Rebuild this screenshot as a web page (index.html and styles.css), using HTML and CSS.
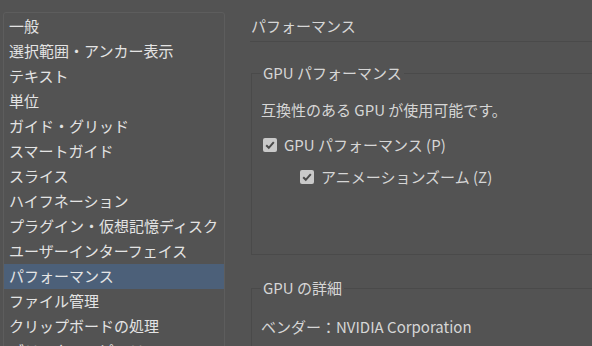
FILE: index.html
```html
<!DOCTYPE html>
<html>
 <head>
  <meta charset="utf-8">
  <link rel="stylesheet" href="styles.css">
 </head>
 <body>
  <div class="page">
   <ul class="menu">
    <li>一般</li>
    <li>選択範囲・アンカー表示</li>
    <li>テキスト</li>
    <li>単位</li>
    <li>ガイド・グリッド</li>
    <li>スマートガイド</li>
    <li>スライス</li>
    <li>ハイフネーション</li>
    <li>プラグイン・仮想記憶ディスク</li>
    <li>ユーザーインターフェイス</li>
    <li class="active">パフォーマンス</li>
    <li>ファイル管理</li>
    <li>クリップボードの処理</li>
    <li>ブラックのアピアランス</li>
   </ul>

   <div class="pane">
    <h2 class="title">パフォーマンス</h2>

    <fieldset class="group">
     <legend>GPU パフォーマンス</legend>
     <p class="note">互換性のある GPU が使用可能です。</p>
     <label class="check">
      <span class="box"><svg width="14" height="14" viewBox="0 0 14 14"><path d="M3.2 7.2 L5.8 9.8 L10.8 4.2" fill="none" stroke="#4a4a4a" stroke-width="2"/></svg></span>
      GPU パフォーマンス (P)
     </label>
     <label class="check sub">
      <span class="box"><svg width="14" height="14" viewBox="0 0 14 14"><path d="M3.2 7.2 L5.8 9.8 L10.8 4.2" fill="none" stroke="#4a4a4a" stroke-width="2"/></svg></span>
      アニメーションズーム (Z)
     </label>
    </fieldset>

    <fieldset class="group details">
     <legend>GPU の詳細</legend>
     <p class="note">ベンダー：NVIDIA Corporation</p>
    </fieldset>
   </div>
  </div>
 </body>
</html>
```

FILE: styles.css
```css
body {
  margin: 0;
  background: #535353;
  overflow: hidden;
  font-family: "Noto Sans CJK JP", "Noto Sans", sans-serif;
  font-size: 15px;
}

.page {
  display: flex;
  align-items: flex-start;
  height: 346px;
}

/* left list */
.menu {
  list-style: none;
  margin: 12px 0 0 3px;
  padding: 1px 0 0 0;
  width: 220px;
  height: 400px;
  border: 1px solid #5d5d5d;
  border-radius: 3px;
  flex-shrink: 0;
}
.menu li {
  height: 25px;
  line-height: 24px;
  padding-left: 5px;
  color: #e4e4e4;
  white-space: nowrap;
}
.menu li.active {
  background: #4c6079;
}

/* right side */
.pane {
  margin-left: 25px;
  width: 380px;
  flex-shrink: 0;
  color: #d6d6d6;
}
.title {
  font-size: 15px;
  font-weight: normal;
  margin: 0;
  padding-top: 14px;
  line-height: 24px;
  height: 27px;
  padding-left: 1px;
  border-bottom: 1px solid #4a4a4a;
}

.group {
  margin: 21px 0 0 1px;
  padding: 0 0 0 9px;
  border: 1px solid #4a4a4a;
  border-right: none;
  height: 190px;
}
.group legend {
  padding: 0 2px;
  line-height: 20px;
}
.note {
  margin: 17px 0 0 0;
  line-height: 20px;
}
.check {
  display: flex;
  align-items: center;
  gap: 7px;
  margin-top: 15px;
  margin-left: 2px;
  line-height: 20px;
}
.check.sub {
  margin-top: 12px;
  margin-left: 39px;
}
.box {
  width: 14px;
  height: 14px;
  background: #c9c9c9;
  border-radius: 2px;
  display: flex;
}

.details {
  margin-top: 23px;
  height: 120px;
}
.details .note {
  margin-top: 19px;
}
```
